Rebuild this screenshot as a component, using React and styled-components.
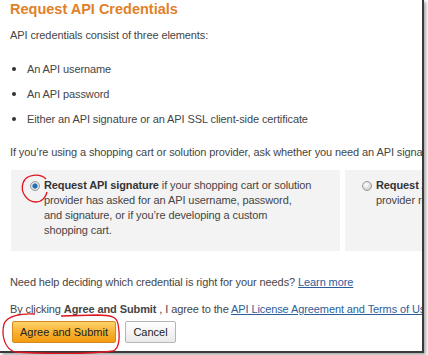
import React from 'react';
import styled, { createGlobalStyle } from 'styled-components';

const GlobalStyle = createGlobalStyle`
  html, body {
    margin: 0;
    padding: 0;
    background: #ffffff;
  }
  body {
    font-family: "Liberation Sans", Arial, sans-serif;
  }
`;

const Frame = styled.div`
  position: relative;
  width: 428px;
  height: 355px;
  overflow: hidden;
  background: #ffffff;
`;

const Shot = styled.div`
  width: 422px;
  height: 351px;
  overflow: hidden;
  border-right: 2px solid #3a3a3a;
  border-bottom: 2px solid #3a3a3a;
  box-shadow: 2px 2px 3px rgba(0, 0, 0, 0.35);
  background: #ffffff;
`;

const Content = styled.div`
  width: 640px;
  padding: 0 0 0 10px;
  color: #454545;
  font-size: 11px;
  letter-spacing: -0.1px;
`;

const Title = styled.h1`
  margin: 0;
  font-size: 14.5px;
  line-height: 18px;
  font-weight: 700;
  letter-spacing: 0;
  color: #e0812a;
`;

const Para = styled.p`
  margin: ${(p) => p.$top || 0}px 0 0;
  line-height: 14px;
  white-space: nowrap;
`;

const List = styled.ul`
  margin: 20px 0 0;
  padding: 0;
  list-style: none;
  display: flex;
  flex-direction: column;
  gap: 11px;
`;

const Item = styled.li`
  display: flex;
  align-items: center;
  gap: 11px;
  line-height: 14px;
  padding-left: 2px;
  &::before {
    content: '';
    width: 4px;
    height: 4px;
    border-radius: 50%;
    background: #333;
  }
`;

const Options = styled.div`
  display: flex;
  gap: 5px;
  margin: 11px 0 0 1px;
`;

const Option = styled.div`
  width: ${(p) => p.$w}px;
  flex-shrink: 0;
  height: 81px;
  box-sizing: border-box;
  background: #f3f3f3;
  padding: 11px 0 0 ${(p) => p.$pad}px;
  display: flex;
  gap: 4px;
`;

const Radio = styled.span`
  width: 10px;
  height: 10px;
  flex-shrink: 0;
  border-radius: 50%;
  box-sizing: border-box;
  border: 1px solid #9a9a9a;
  background: ${(p) =>
    p.$on
      ? 'radial-gradient(circle, #1f6fb0 0 2px, #6aa6d8 2.5px, #dadada 3px, #eeeeee 5px)'
      : 'radial-gradient(circle at 40% 35%, #ffffff 0, #e4e4e4 3px, #cfcfcf 5px)'};
`;

const OptionText = styled.div`
  line-height: 15px;
  margin-top: -3px;
  white-space: nowrap;
  strong {
    color: #333;
  }
`;

const Link = styled.a`
  color: #2e5d9a;
  text-decoration: underline;
`;

const Buttons = styled.div`
  display: flex;
  gap: 9px;
  margin: 5px 0 0 2px;
`;

const Button = styled.button`
  width: ${(p) => p.$w}px;
  height: 22px;
  padding: 0;
  font-family: "Liberation Sans", Arial, sans-serif;
  font-size: 11px;
  color: #222;
  border-radius: 2px;
  border: 1px solid ${(p) => (p.$primary ? '#d38a1c' : '#b5b5b5')};
  background: ${(p) =>
    p.$primary
      ? 'linear-gradient(#ffd36a, #f9b133 50%, #f39c12)'
      : 'linear-gradient(#ffffff, #e9e9e9)'};
`;

const Mark = styled.svg`
  position: absolute;
  left: ${(p) => p.$x}px;
  top: ${(p) => p.$y}px;
  overflow: visible;
  pointer-events: none;
`;

const App = () => (
  <Frame>
    <GlobalStyle />
    <Shot>
      <Content>
        <Title>Request API Credentials</Title>
        <Para $top={10}>API credentials consist of three elements:</Para>
        <List>
          <Item>An API username</Item>
          <Item>An API password</Item>
          <Item>Either an API signature or an API SSL client-side certificate</Item>
        </List>
        <Para $top={19}>
          If you’re using a shopping cart or solution provider, ask whether you need an API signature or an API certificate.
        </Para>
        <Options>
          <Option $w={329} $pad={19}>
            <Radio $on />
            <OptionText>
              <strong>Request API signature</strong> if your shopping cart or solution
              <br />
              provider has asked for an API username, password,
              <br />
              and signature, or if you’re developing a custom
              <br />
              shopping cart.
            </OptionText>
          </Option>
          <Option $w={260} $pad={17}>
            <Radio />
            <OptionText>
              <strong>Request API certificate</strong> if your shopping cart or solution
              <br />
              provider requires an API certificate.
            </OptionText>
          </Option>
        </Options>
        <Para $top={24}>
          Need help deciding which credential is right for your needs? <Link>Learn more</Link>
        </Para>
        <Para $top={13}>
          By clicking <strong>Agree and Submit</strong> , I agree to the{' '}
          <Link>API License Agreement and Terms of Use</Link>.
        </Para>
        <Buttons>
          <Button $primary $w={104}>Agree and Submit</Button>
          <Button $w={51}>Cancel</Button>
        </Buttons>
      </Content>
    </Shot>
    <Mark $x={20} $y={173} width="30" height="32">
      <path
        d="M26 6 C20 0 6 1 3 10 C0 19 7 29 16 29 C22 29 26 24 27 19"
        fill="none"
        stroke="#e0141e"
        strokeWidth="1.3"
      />
    </Mark>
    <Mark $x={1} $y={309} width="120" height="46">
      <path
        d="M34 5 C20 4 6 7 3 15 C0 27 4 40 14 43 C40 45 90 45 112 42 C119 40 119 26 117 15 C116 8 110 6 96 6 L60 7"
        fill="none"
        stroke="#e0141e"
        strokeWidth="1.3"
      />
    </Mark>
  </Frame>
);

export default App;
